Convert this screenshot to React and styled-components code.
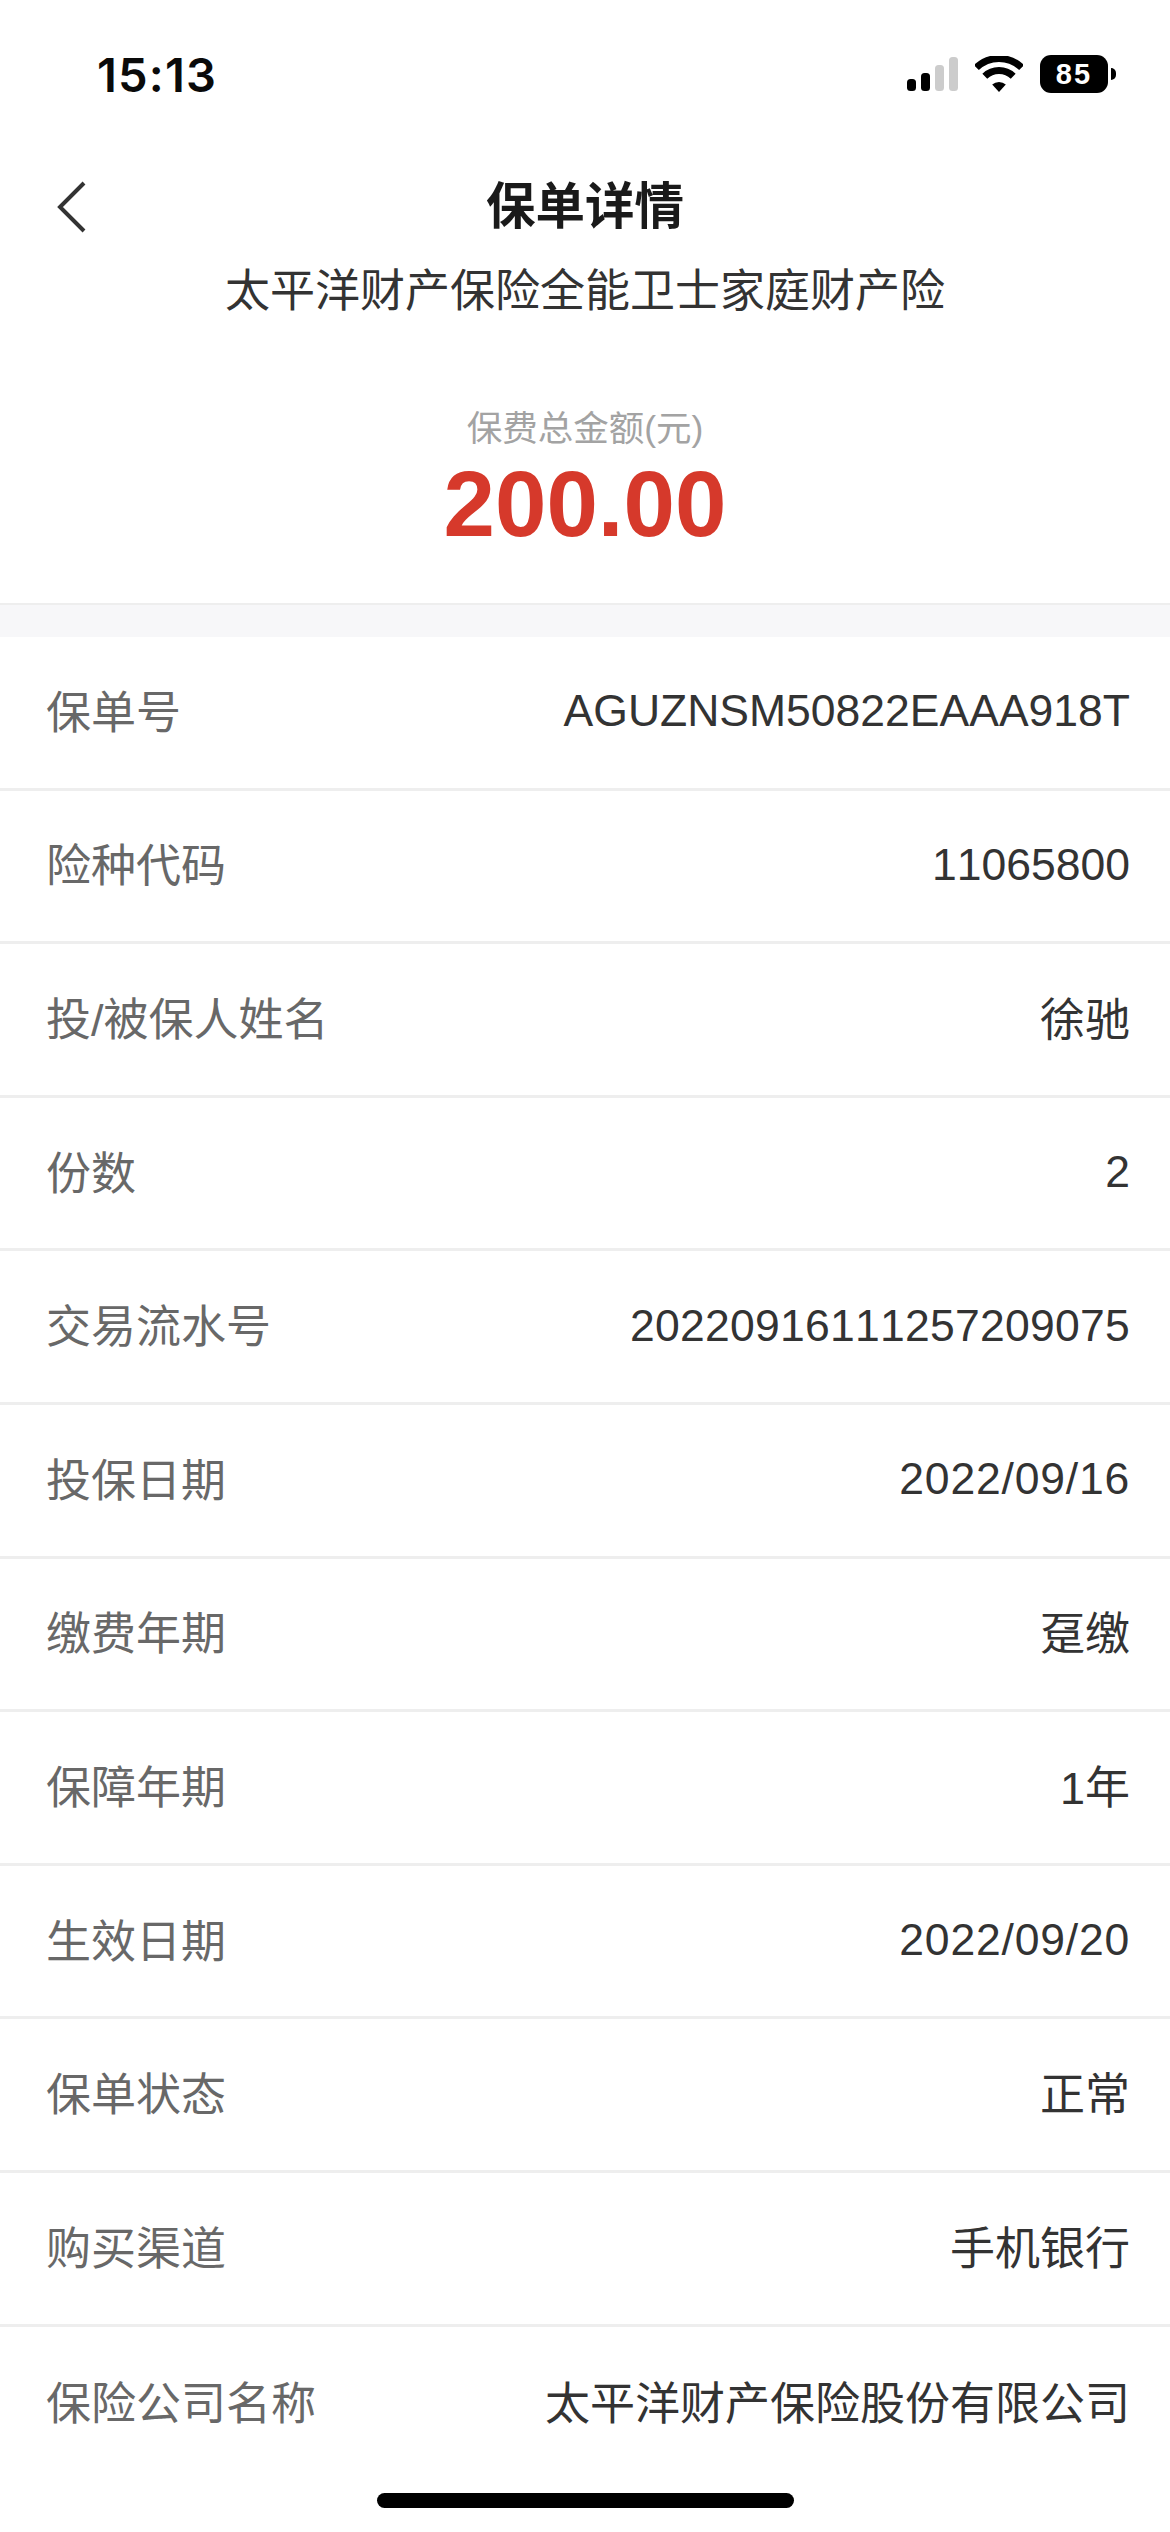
import React from "react";
import styled, { createGlobalStyle } from "styled-components";

const CJK = `"Liberation Sans", "Noto Sans CJK SC", sans-serif`;

const Global = createGlobalStyle`
  html, body { margin: 0; padding: 0; background: #fff; }
  * { box-sizing: border-box; }
`;

const Page = styled.div`
  position: relative;
  width: 1170px;
  height: 2532px;
  overflow: hidden;
  background: #fff;
  font-family: ${CJK};
`;

const StatusBar = styled.div`
  height: 148px;
  padding: 0 62px 0 97px;
  display: flex;
  align-items: center;
  justify-content: space-between;
`;

const Time = styled.div`
  font-family: Inter, sans-serif;
  font-size: 47px;
  font-weight: 600;
  letter-spacing: 1.2px;
  color: #0a0a0a;
`;

const StatusIcons = styled.div`
  display: flex;
  align-items: center;
  gap: 17px;
`;

const Battery = styled.div`
  position: relative;
  width: 68px;
  height: 38px;
  border-radius: 11px;
  background: #000;
  color: #fff;
  font-family: "Liberation Sans", sans-serif;
  font-size: 29px;
  font-weight: 700;
  letter-spacing: 2px;
  display: flex;
  align-items: center;
  justify-content: center;
  &::after {
    content: "";
    position: absolute;
    left: 71px;
    top: 13px;
    width: 5px;
    height: 12px;
    background: #000;
    border-radius: 0 6px 6px 0;
  }
`;

const NavBar = styled.div`
  position: relative;
  height: 118px;
  padding-bottom: 10px;
  display: flex;
  align-items: center;
  justify-content: center;
`;

const BackIcon = styled.svg`
  position: absolute;
  left: 54px;
  top: 33px;
`;

const Title = styled.h1`
  margin: 0;
  font-size: 49.5px;
  font-weight: 700;
  color: #1a1a1a;
`;

const Subtitle = styled.div`
  font-size: 45px;
  line-height: 52px;
  text-align: center;
  color: #333;
`;

const Summary = styled.div`
  margin-top: 89px;
  padding-bottom: 49px;
  display: flex;
  flex-direction: column;
  align-items: center;
`;

const AmountLabel = styled.div`
  font-size: 35.5px;
  line-height: 44px;
  color: #a3a3a3;
`;

const Amount = styled.div`
  margin-top: 3px;
  font-size: 92.5px;
  line-height: 100px;
  font-weight: 700;
  color: #d6392b;
`;

const Band = styled.div`
  height: 34px;
  background: #f7f7f9;
  border-top: 2px solid #eeeeee;
`;

const Row = styled.div`
  height: 153.6px;
  padding: 0 40px 0 46px;
  display: flex;
  align-items: center;
  justify-content: space-between;
  border-bottom: ${(p) => (p.$last ? "none" : "3px solid #eeeeee")};
`;

const Label = styled.span`
  padding-bottom: 6px;
  font-size: 45px;
  color: #686868;
`;

const Value = styled.span`
  padding-bottom: ${(p) => (p.$latin ? "2px" : "6px")};
  font-size: ${(p) => (p.$latin ? "44.5px" : "45px")};
  font-kerning: ${(p) => (p.$latin ? "none" : "auto")};
  letter-spacing: ${(p) => p.$spacing || 0}px;
  color: #333;
`;

const HomeIndicator = styled.div`
  position: absolute;
  left: 377px;
  bottom: 24px;
  width: 417px;
  height: 15px;
  border-radius: 8px;
  background: #000;
`;

const rows = [
  ["保单号", "AGUZNSM50822EAAA918T", true],
  ["险种代码", "11065800", true],
  ["投/被保人姓名", "徐驰"],
  ["份数", "2", true],
  ["交易流水号", "20220916111257209075", true, 0.25],
  ["投保日期", "2022/09/16", true, 0.8],
  ["缴费年期", "趸缴"],
  ["保障年期", "1年"],
  ["生效日期", "2022/09/20", true, 0.8],
  ["保单状态", "正常"],
  ["购买渠道", "手机银行"],
  ["保险公司名称", "太平洋财产保险股份有限公司"],
];

const Signal = () => (
  <svg width="51" height="34" viewBox="0 0 51 34">
    <rect x="0" y="22" width="9" height="12" rx="3.5" fill="#000" />
    <rect x="14" y="16" width="9" height="18" rx="3.5" fill="#000" />
    <rect x="28" y="8" width="9" height="26" rx="3.5" fill="#ccc" />
    <rect x="42" y="0" width="9" height="34" rx="3.5" fill="#ccc" />
  </svg>
);

const Wifi = () => (
  <svg width="48" height="36" viewBox="0 0 48 36">
    <path d="M1.4 11.6A32.5 32.5 0 0 1 46.6 11.6" fill="none" stroke="#000" strokeWidth="7" />
    <path d="M9.8 20.3A20.5 20.5 0 0 1 38.2 20.3" fill="none" stroke="#000" strokeWidth="7" />
    <path d="M24 36L17.2 28.6A10 10 0 0 1 30.8 28.6Z" fill="#000" />
  </svg>
);

export default function App() {
  return (
    <Page>
      <Global />
      <StatusBar>
        <Time>15:13</Time>
        <StatusIcons>
          <Signal />
          <Wifi />
          <Battery>85</Battery>
        </StatusIcons>
      </StatusBar>
      <NavBar>
        <BackIcon width="32" height="52" viewBox="0 0 32 52">
          <path d="M30 2L6 26L30 50" fill="none" stroke="#333" strokeWidth="4" />
        </BackIcon>
        <Title>保单详情</Title>
      </NavBar>
      <Subtitle>太平洋财产保险全能卫士家庭财产险</Subtitle>
      <Summary>
        <AmountLabel>保费总金额(元)</AmountLabel>
        <Amount>200.00</Amount>
      </Summary>
      <Band />
      {rows.map(([label, value, latin, spacing], i) => (
        <Row key={label} $last={i === rows.length - 1}>
          <Label>{label}</Label>
          <Value $latin={latin} $spacing={spacing}>{value}</Value>
        </Row>
      ))}
      <HomeIndicator />
    </Page>
  );
}
